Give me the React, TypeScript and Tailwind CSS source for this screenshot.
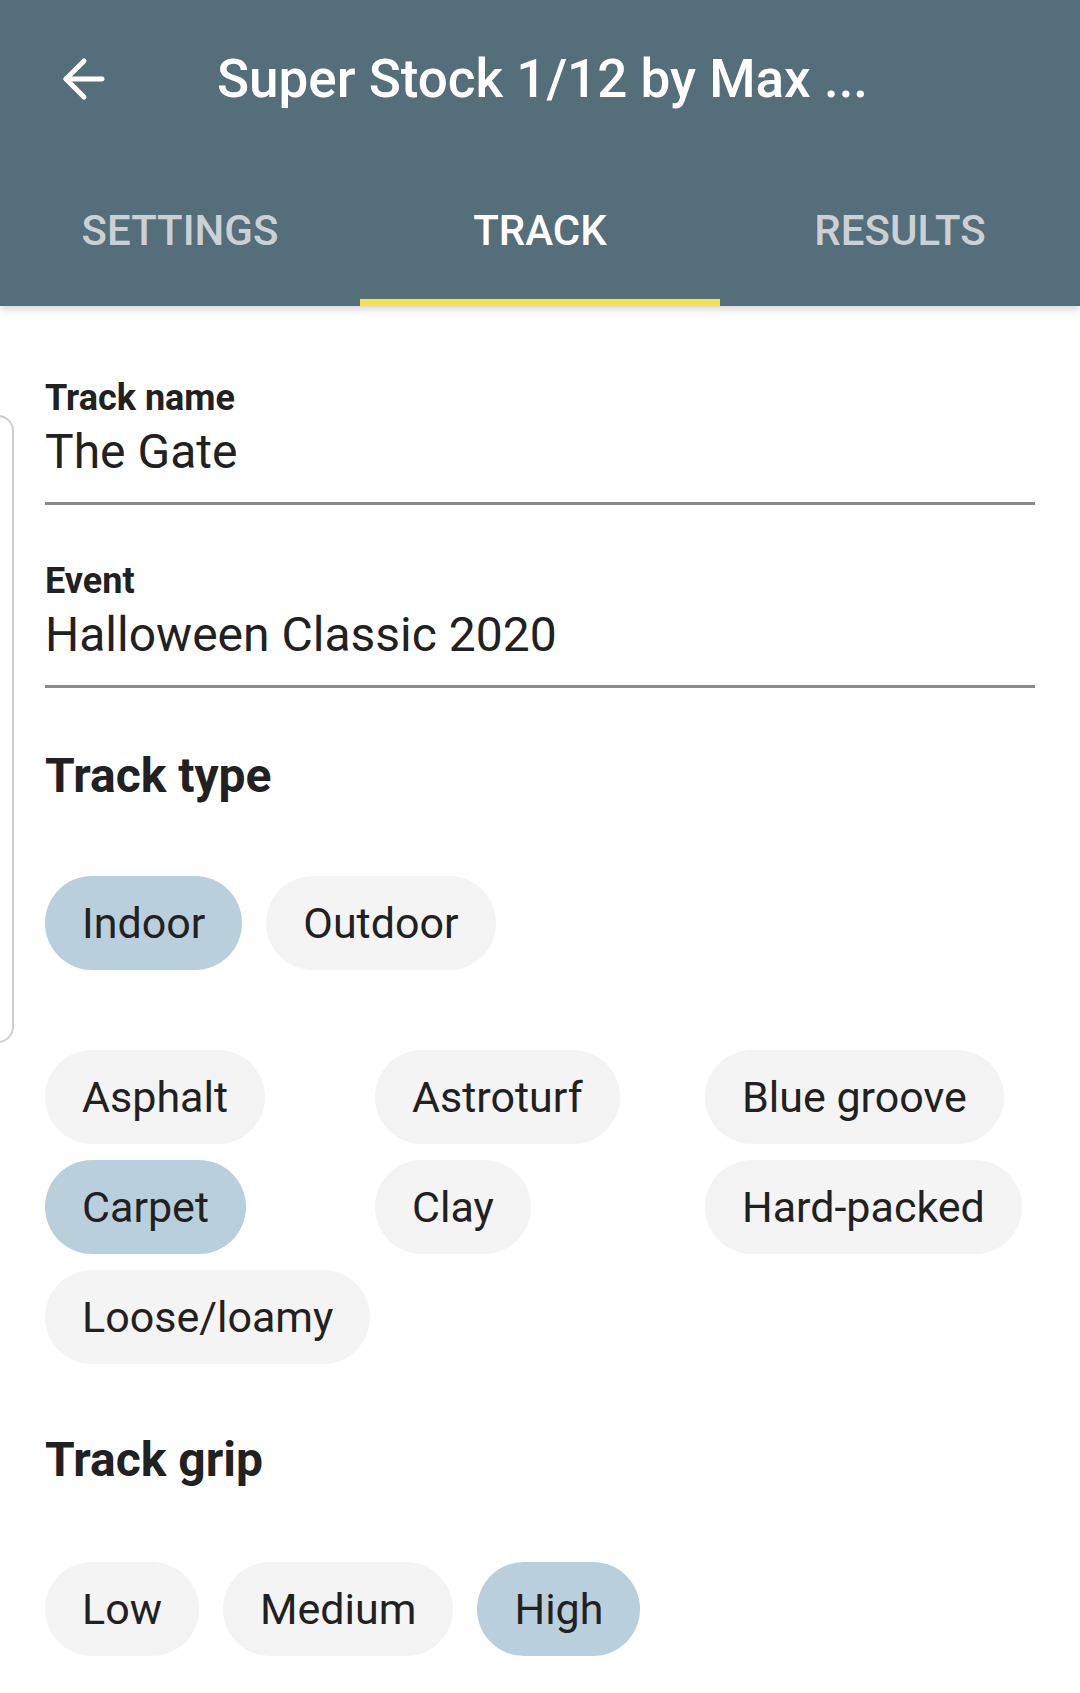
import { ArrowLeft } from 'lucide-react';

const surfaces = [
  { label: 'Asphalt', on: false },
  { label: 'Astroturf', on: false },
  { label: 'Blue groove', on: false },
  { label: 'Carpet', on: true },
  { label: 'Clay', on: false },
  { label: 'Hard-packed', on: false },
  { label: 'Loose/loamy', on: false },
];

function Chip({ label, on }: { label: string; on?: boolean }) {
  return (
    <span
      className={
        'inline-flex h-[94px] items-center rounded-full px-[37px] text-[43px] leading-none text-[#212121] ' +
        (on ? 'bg-[#b9d0dc]' : 'bg-[#f4f4f4]')
      }
    >
      {label}
    </span>
  );
}

function Field({ label, value }: { label: string; value: string }) {
  return (
    <div>
      <div className="text-[36px] font-bold leading-none text-[#212121]">{label}</div>
      <div className="mt-[12px] text-[48px] leading-none text-[#212121]">{value}</div>
      <div className="mt-[26px] h-[3px] bg-[#8a8a8a]" />
    </div>
  );
}

export default function App() {
  return (
    <div className="relative min-h-screen bg-white font-['Roboto','Liberation_Sans',sans-serif]">

      {/* ── App bar + tabs ─────────────────────────────────────── */}
      <header className="relative z-10 bg-[#546e7a] shadow-[0_3px_8px_rgba(0,0,0,0.18)]">
        <div className="flex h-[158px] items-center">
          <div className="ml-[48px] flex h-[72px] w-[72px] items-center justify-center">
            <ArrowLeft className="h-[62px] w-[62px] text-white" strokeWidth={1.9} />
          </div>
          <h1 className="ml-[97px] text-[53px] font-medium leading-none text-white">
            Super Stock 1/12 by Max ...
          </h1>
        </div>

        <nav className="grid h-[148px] grid-cols-3">
          <div className="flex items-center justify-center pb-[2px] text-[42px] font-medium uppercase leading-none text-white/70">
            Settings
          </div>
          <div className="relative flex items-center justify-center pb-[2px] text-[42px] font-medium uppercase leading-none text-white">
            Track
            <span className="absolute inset-x-0 bottom-0 h-[7px] bg-[#f3e24c]" />
          </div>
          <div className="flex items-center justify-center pb-[2px] text-[42px] font-medium uppercase leading-none text-white/70">
            Results
          </div>
        </nav>
      </header>

      {/* peeking card edge on the left */}
      <div className="absolute left-[-20px] top-[415px] h-[628px] w-[34px] rounded-[16px] border-2 border-[#cfcfcf]" />

      {/* ── Form ───────────────────────────────────────────────── */}
      <main className="px-[45px] pt-[74px] pb-[36px]">
        <Field label="Track name" value="The Gate" />
        <div className="mt-[58px]">
          <Field label="Event" value="Halloween Classic 2020" />
        </div>

        <h2 className="mt-[64px] text-[48px] font-bold leading-none text-[#212121]">Track type</h2>

        <div className="mt-[76px] flex gap-[24px]">
          <Chip label="Indoor" on />
          <Chip label="Outdoor" />
        </div>

        <div className="mt-[80px] grid grid-cols-3 gap-y-[16px]">
          {surfaces.map((s) => (
            <div key={s.label}>
              <Chip label={s.label} on={s.on} />
            </div>
          ))}
        </div>

        <h2 className="mt-[72px] text-[48px] font-bold leading-none text-[#212121]">Track grip</h2>

        <div className="mt-[78px] flex gap-[24px]">
          <Chip label="Low" />
          <Chip label="Medium" />
          <Chip label="High" on />
        </div>
      </main>
    </div>
  );
}
